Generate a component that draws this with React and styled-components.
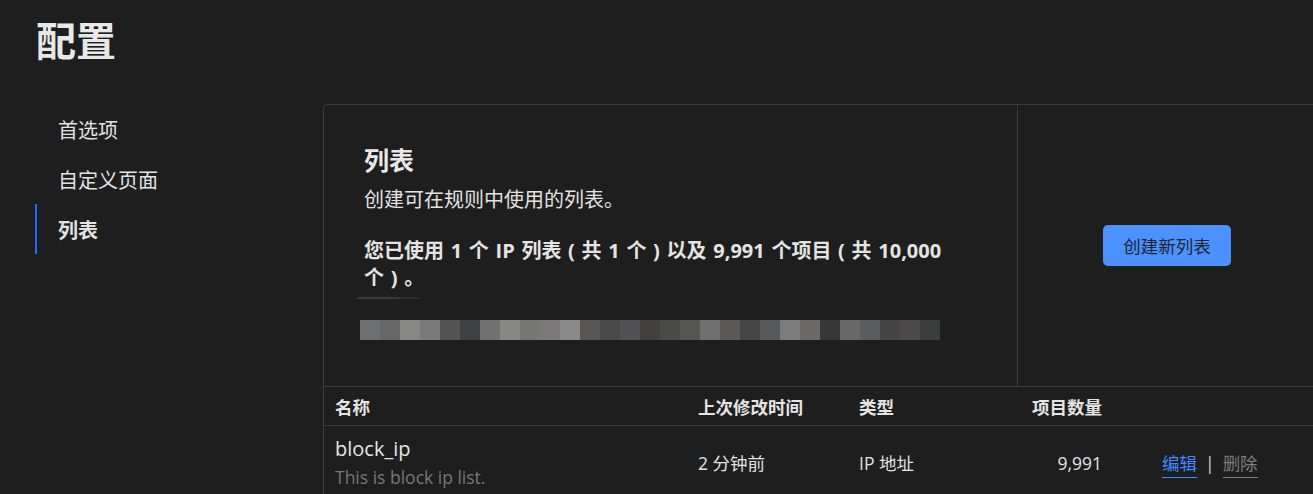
import React from "react";
import styled, { createGlobalStyle } from "styled-components";

const GlobalStyle = createGlobalStyle`
  html, body {
    margin: 0;
    padding: 0;
    background: #1e1e1e;
    overflow: hidden;
  }
  body {
    font-family: "Open Sans", "Noto Sans CJK SC", sans-serif;
    color: #e4e4e4;
  }
`;

const Page = styled.div`
  width: 1313px;
  height: 494px;
  padding-left: 35px;
  box-sizing: border-box;
  overflow: hidden;
`;

const Title = styled.h1`
  margin: 0;
  padding: 16px 0 0 1px;
  height: 104px;
  box-sizing: border-box;
  font-size: 40px;
  line-height: 50px;
  font-weight: 700;
  color: #e8e8e8;
`;

const Layout = styled.div`
  display: grid;
  grid-template-columns: 288px 994px;
`;

const Nav = styled.nav`
  display: flex;
  flex-direction: column;
`;

const NavItem = styled.a`
  display: flex;
  align-items: center;
  height: 50px;
  padding-left: 21px;
  border-left: 2px solid ${p => (p.$active ? "#1a6dff" : "transparent")};
  font-size: 20px;
  font-weight: ${p => (p.$active ? 700 : 400)};
  color: #e2e2e2;
  cursor: pointer;
`;

const Card = styled.section`
  border: 1px solid #3b3b3b;
  border-radius: 4px 0 0 0;
`;

const Top = styled.div`
  display: grid;
  grid-template-columns: 1fr 299px;
  border-bottom: 1px solid #3b3b3b;
`;

const Intro = styled.div`
  padding: 38px 40px 46px 40px;
`;

const Heading = styled.h2`
  margin: 0;
  font-size: 25px;
  line-height: 35px;
  font-weight: 700;
  color: #e8e8e8;
`;

const Desc = styled.p`
  margin: 8px 0 0;
  font-size: 20px;
  line-height: 28px;
  color: #e2e2e2;
`;

const Usage = styled.p`
  margin: 23px 0 0;
  max-width: 595px;
  font-size: 20px;
  line-height: 27px;
  font-weight: 700;
  word-spacing: 1.5px;
  color: #e4e4e4;
`;

const Rule = styled.div`
  margin: 6px 0 0 -7px;
  width: 62px;
  height: 2px;
  background: linear-gradient(90deg, #3a3a3a 0 68%, #2c2c2c 68% 100%);
`;

const Redacted = styled.div`
  display: flex;
  margin: 21px 0 0 -4px;
  height: 20px;
`;

const Pixel = styled.span`
  width: 20px;
  height: 20px;
  background: ${p => p.$c};
`;

const Aside = styled.div`
  display: flex;
  align-items: center;
  justify-content: center;
  border-left: 1px solid #3b3b3b;
`;

const PrimaryButton = styled.button`
  width: 128px;
  height: 41px;
  border: none;
  border-radius: 5px;
  background: #4b91ff;
  color: #1f2630;
  font-family: inherit;
  font-size: 17.5px;
  cursor: pointer;
`;

const Row = styled.div`
  display: grid;
  grid-template-columns: 363px 161px 143px 100px 60px auto;
  align-items: center;
  padding-left: 11px;
  border-bottom: ${p => (p.$head ? "1px solid #3b3b3b" : "none")};
  min-height: ${p => (p.$head ? "38px" : "auto")};
  padding-top: ${p => (p.$head ? "0" : "9px")};
  padding-bottom: ${p => (p.$head ? "0" : "20px")};
`;

const HeadCell = styled.div`
  font-size: 17.5px;
  font-weight: 700;
  color: #e4e4e4;
  text-align: ${p => (p.$right ? "right" : "left")};
`;

const Cell = styled.div`
  font-size: 17.5px;
  line-height: 28px;
  color: #e2e2e2;
  text-align: ${p => (p.$right ? "right" : "left")};
`;

const Name = styled.div`
  font-size: 20px;
  line-height: 28px;
  color: #e6e6e6;
`;

const Note = styled.div`
  font-size: 17.5px;
  line-height: 28px;
  color: #777777;
`;

const Actions = styled.div`
  display: flex;
  align-items: center;
  font-size: 17.5px;
  line-height: 28px;
`;

const ActionLink = styled.a`
  padding-top: 3px;
  color: ${p => (p.$muted ? "#7c7c7c" : "#3d8bff")};
  border-bottom: 1px solid ${p => (p.$muted ? "#7c7c7c" : "#3d8bff")};
  line-height: 24px;
  padding-bottom: 2px;
  cursor: pointer;
`;

const Sep = styled.span`
  margin: 0 8px 0 8px;
  color: #d8d8d8;
`;

const pixels = [
  "#6e6f70", "#666766", "#878786", "#7b7a7a", "#545351", "#3f4044",
  "#717171", "#868685", "#767674", "#7a7878", "#898989", "#575654",
  "#4a4949", "#515255", "#42413f", "#4a4a47", "#555553", "#6f6f6f",
  "#5a5957", "#464646", "#58595b", "#7c7c7c", "#6c6968", "#37373a",
  "#686866", "#5c5d5f", "#444444", "#4b4949", "#3b3d3d"
];

const navItems = ["首选项", "自定义页面", "列表"];

const App = () => {
  return (
    <Page>
      <GlobalStyle />
      <Title>配置</Title>
      <Layout>
        <Nav>
          {navItems.map(item => (
            <NavItem key={item} $active={item === "列表"}>
              {item}
            </NavItem>
          ))}
        </Nav>
        <Card>
          <Top>
            <Intro>
              <Heading>列表</Heading>
              <Desc>创建可在规则中使用的列表。</Desc>
              <Usage>
                您已使用 1 个 IP 列表 ( 共 1 个 ) 以及 9,991 个项目 ( 共&nbsp;10,000 个&nbsp;)&nbsp;。
              </Usage>
              <Rule />
              <Redacted>
                {pixels.map((c, i) => (
                  <Pixel key={i} $c={c} />
                ))}
              </Redacted>
            </Intro>
            <Aside>
              <PrimaryButton>创建新列表</PrimaryButton>
            </Aside>
          </Top>
          <Row $head>
            <HeadCell>名称</HeadCell>
            <HeadCell>上次修改时间</HeadCell>
            <HeadCell>类型</HeadCell>
            <HeadCell $right>项目数量</HeadCell>
            <div />
            <div />
          </Row>
          <Row>
            <div>
              <Name>block_ip</Name>
              <Note>This is block ip list.</Note>
            </div>
            <Cell>2 分钟前</Cell>
            <Cell>IP 地址</Cell>
            <Cell $right>9,991</Cell>
            <div />
            <Actions>
              <ActionLink>编辑</ActionLink>
              <Sep>|</Sep>
              <ActionLink $muted>删除</ActionLink>
            </Actions>
          </Row>
        </Card>
      </Layout>
    </Page>
  );
};

export default App;
